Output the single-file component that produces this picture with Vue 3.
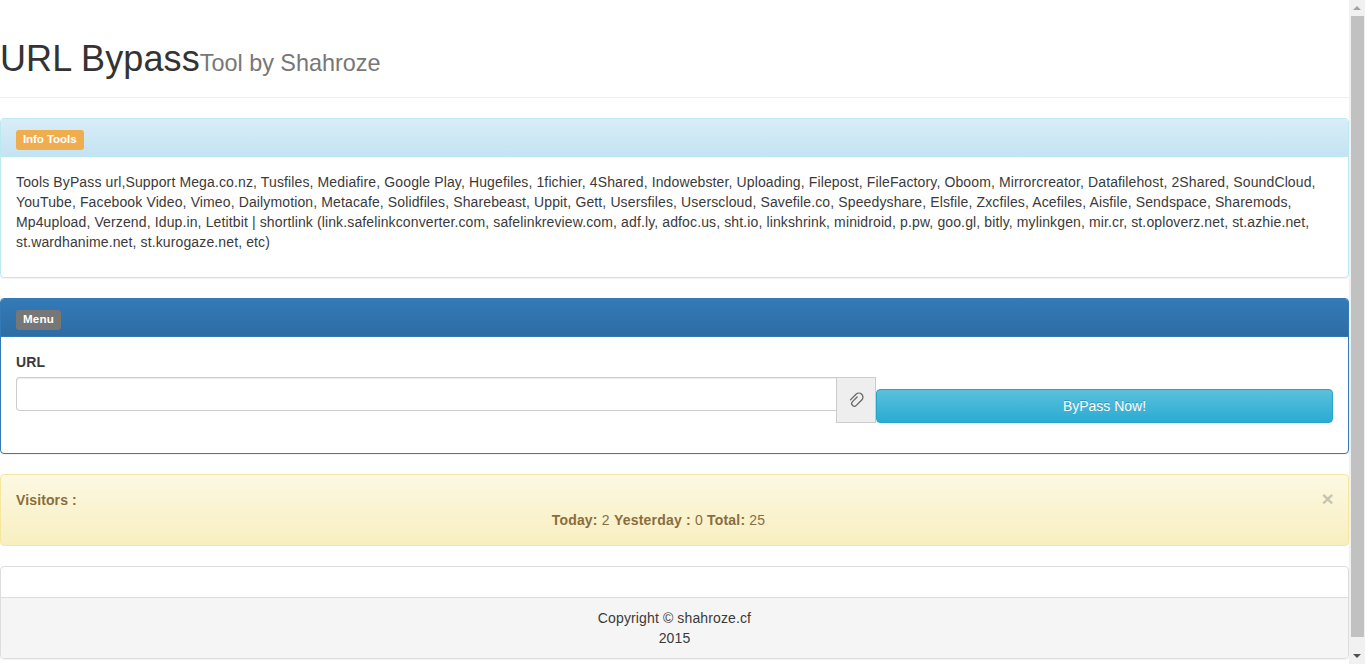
<script setup>
const info = 'Tools ByPass url,Support Mega.co.nz, Tusfiles, Mediafire, Google Play, Hugefiles, 1fichier, 4Shared, Indowebster, Uploading, Filepost, FileFactory, Oboom, Mirrorcreator, Datafilehost, 2Shared, SoundCloud, YouTube, Facebook Video, Vimeo, Dailymotion, Metacafe, Solidfiles, Sharebeast, Uppit, Gett, Usersfiles, Userscloud, Savefile.co, Speedyshare, Elsfile, Zxcfiles, Acefiles, Aisfile, Sendspace, Sharemods, Mp4upload, Verzend, Idup.in, Letitbit | shortlink (link.safelinkconverter.com, safelinkreview.com, adf.ly, adfoc.us, sht.io, linkshrink, minidroid, p.pw, goo.gl, bitly, mylinkgen, mir.cr, st.oploverz.net, st.azhie.net, st.wardhanime.net, st.kurogaze.net, etc)'
</script>

<template>
  <div class="window">
    <main class="page">
      <header class="page-header">
        <h1>URL Bypass<small>Tool by Shahroze</small></h1>
      </header>

      <section class="panel panel-info">
        <div class="panel-heading"><span class="label label-warning">Info Tools</span></div>
        <div class="panel-body"><p>{{ info }}</p></div>
      </section>

      <section class="panel panel-primary">
        <div class="panel-heading"><span class="label label-default">Menu</span></div>
        <div class="panel-body">
          <label class="field-label" for="url">URL</label>
          <div class="input-row">
            <input id="url" class="form-control" type="text" />
            <span class="addon">
              <svg width="18" height="18" viewBox="-8 -8 16 16" fill="none" stroke="#666" stroke-width="1.15" stroke-linecap="round">
                <path transform="rotate(45)" d="M-1.2 -2.6V3.2a2.4 2.4 0 0 0 4.8 0V-3.6a3.6 3.6 0 0 0 -7.2 0V3.4" />
              </svg>
            </span>
            <button class="btn-info" type="button">ByPass Now!</button>
          </div>
        </div>
      </section>

      <section class="alert">
        <span class="close">×</span>
        <strong>Visitors :</strong>
        <div class="stats"><strong>Today:</strong> 2 <strong>Yesterday :</strong> 0 <strong>Total:</strong> 25</div>
      </section>

      <section class="panel panel-default">
        <div class="panel-body empty"></div>
        <div class="panel-footer">Copyright © shahroze.cf<br />2015</div>
      </section>
    </main>

    <aside class="scrollbar">
      <span class="arrow up"></span>
      <span class="thumb"></span>
      <span class="arrow down"></span>
    </aside>
  </div>
</template>

<style>
html, body { margin: 0; overflow: hidden; }
</style>

<style scoped>
.window {
  display: flex;
  height: 664px;
  overflow: hidden;
  background: #fff;
  color: #3a3a3a;
  font: 14px/20px "Liberation Sans", Arial, sans-serif;
  letter-spacing: .125px;
}
.page { flex: 0 0 1349px; width: 1349px; }
.page-header {
  margin-bottom: 20px;
  padding-bottom: 9px;
  border-bottom: 1px solid #eee;
}
h1 {
  margin: 0;
  padding-top: 39px;
  height: 49px;
  font-size: 36px;
  font-weight: 500;
  line-height: 39.6px;
  letter-spacing: .1px;
  color: #333;
}
small { font-size: 23.4px; font-weight: 400; color: #777; line-height: 1; letter-spacing: 0; }
.panel {
  margin-bottom: 20px;
  border: 1px solid transparent;
  border-radius: 4px;
  box-shadow: 0 1px 1px rgba(0, 0, 0, .05);
}
.panel-heading {
  padding: 11px 15px 6px;
  border-bottom: 1px solid transparent;
  border-radius: 3px 3px 0 0;
  display: flex;
}
.panel-body { padding: 15px; }
.panel-body p { margin: 0 0 10px; }
.panel-info { border-color: #bce8f1; }
.panel-info .panel-heading {
  background: linear-gradient(#d9edf7, #c4e3f3);
  border-bottom-color: #bce8f1;
}
.panel-primary { border-color: #337ab7; }
.panel-primary .panel-heading {
  background: linear-gradient(#337ab7, #2e6da4);
  border-bottom-color: #337ab7;
}
.panel-default { border-color: #ddd; }
.label {
  display: block;
  height: 20px;
  padding: 0 7px;
  border-radius: 3px;
  color: #fff;
  font-size: 11.6px;
  font-weight: 700;
  line-height: 18px;
}
.label-warning { background: #f0ad4e; letter-spacing: -.1px; }
.label-default { background: #777; letter-spacing: .2px; }
.field-label {
  display: block;
  margin-bottom: 5px;
  font-weight: 700;
}
.input-row {
  display: flex;
  align-items: flex-start;
  margin-bottom: 15px;
}
.form-control {
  box-sizing: border-box;
  flex: 0 0 820px;
  height: 34px;
  padding: 6px 12px;
  border: 1px solid #ccc;
  border-right: 0;
  border-radius: 4px 0 0 4px;
  box-shadow: inset 0 1px 1px rgba(0, 0, 0, .075);
  outline: 0;
  background: #fff;
}
.addon {
  box-sizing: border-box;
  flex: 0 0 40px;
  height: 46px;
  display: flex;
  align-items: center;
  justify-content: center;
  background: #eee;
  border: 1px solid #ccc;
}
.btn-info {
  flex: 1;
  height: 34px;
  margin-top: 12px;
  border: 1px solid #28a4c9;
  border-radius: 4px;
  background: linear-gradient(#5bc0de, #2aabd2);
  color: #fff;
  font: inherit;
  text-shadow: 0 -1px 0 rgba(0, 0, 0, .2);
  padding: 6px 12px;
}
.alert {
  position: relative;
  margin-bottom: 20px;
  padding: 15px 47px 15px 15px;
  border: 1px solid #f5e79e;
  border-radius: 4px;
  background: linear-gradient(#fcf8e3, #f8efc0);
  color: #8a6d3b;
  text-shadow: 0 1px 0 rgba(255, 255, 255, .2);
}
.stats { text-align: center; letter-spacing: .2px; }
.close {
  position: absolute;
  top: 13px;
  right: 14px;
  font-size: 21px;
  font-weight: 700;
  line-height: 21px;
  color: #000;
  opacity: .2;
  text-shadow: 0 1px 0 #fff;
}
.empty { height: 0; }
.panel-footer {
  padding: 10px 15px;
  background: #f5f5f5;
  border-top: 1px solid #ddd;
  border-radius: 0 0 3px 3px;
  text-align: center;
}
.scrollbar {
  flex: 0 0 16px;
  height: 664px;
  background: #f1f1f1;
  display: flex;
  flex-direction: column;
  align-items: center;
}
.arrow {
  flex: 0 0 16px;
  width: 15px;
  display: flex;
  align-items: center;
  justify-content: center;
}
.arrow::before {
  content: "";
  border-left: 4px solid transparent;
  border-right: 4px solid transparent;
}
.arrow.up::before { border-bottom: 4px solid #a3a3a3; }
.arrow.down { margin-top: auto; }
.arrow.down::before { border-top: 4px solid #505050; }
.thumb { flex: 1; width: 13px; margin: 0 0 11px; background: #c1c1c1; }
</style>
